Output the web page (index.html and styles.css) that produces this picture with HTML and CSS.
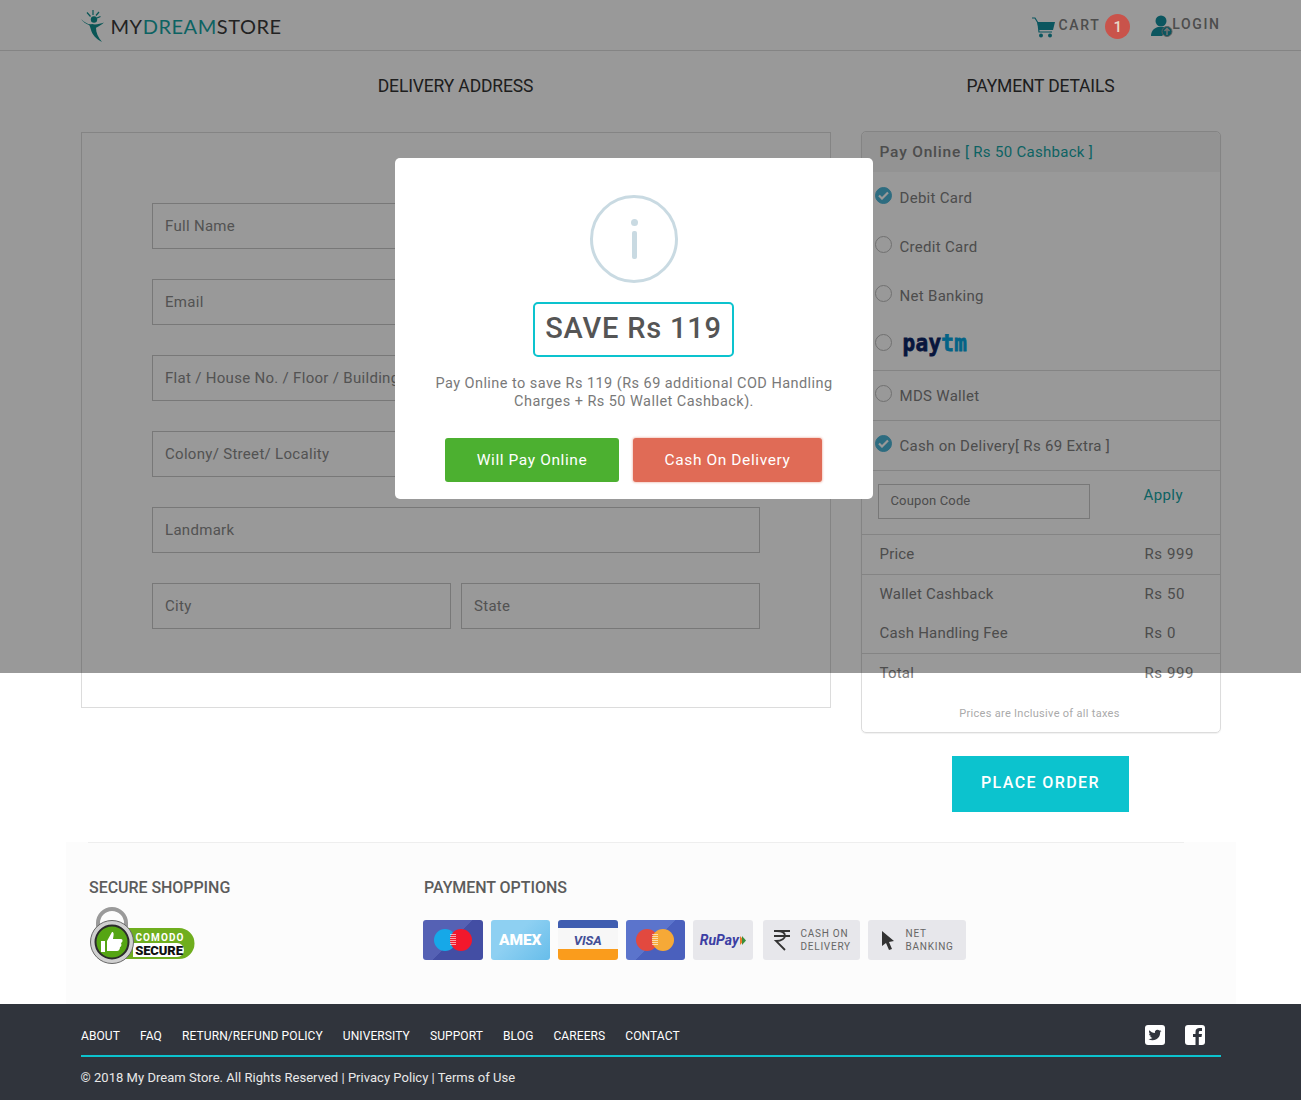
FILE: index.html
```html
<!DOCTYPE html>
<html lang="en">
<head>
<meta charset="utf-8">
<title>My Dream Store - Checkout</title>
<link rel="stylesheet" href="styles.css">
</head>
<body>
<header class="topbar">
  <div class="wrap topbar-inner">
    <a class="logo">
      <svg class="logo-mark" width="26" height="34" viewBox="0 0 26 34"><path fill="#0f8f8f" d="M0 10C4 14 8 16 11 15 14 16 19 15 23 13.500 19 17 16 18 15 19 15 24 17 28 21 33 15 30 11 25 10 21 9 18 9 17 8 16 5 15 2 13 0 10z"/><circle cx="13" cy="10.500" r="3.200" fill="#0f8f8f"/><path fill="none" stroke="#0f8f8f" stroke-width="1.200" d="M12 6V1M9.500 7.500 6 3.500M15 6.500l3-3.500M16 9l3.500-1.500"/></svg>
      <span class="logo-text">MY<b>DREAM</b>STORE</span>
    </a>
    <nav class="topnav">
      <a class="cart">
        <svg width="23" height="21" viewBox="0 0 23 21"><path fill="none" stroke="#138f9f" stroke-width="1.200" d="M0 1h3l3 5 1 9h13"/><path fill="#138f9f" d="M5 5h18l-2 8H7z"/><circle cx="9" cy="18.500" r="2" fill="#138f9f"/><circle cx="18" cy="18.500" r="2" fill="#138f9f"/></svg>
        <span class="nav-label">CART</span>
        <span class="badge">1</span>
      </a>
      <a class="login">
        <svg width="22" height="22" viewBox="0 0 22 22"><circle cx="10" cy="6" r="5.500" fill="#138f9f"/><path fill="#138f9f" d="M0 21c0-5 3-8 7-9h6c3 1 4 2 4 3l-6 6z"/><circle cx="16" cy="16.500" r="5" fill="#138f9f" stroke="#999" stroke-width="1"/><path fill="none" stroke="#bbb" stroke-width="1.500" d="M16 20v-6m-2.500 2 2.500-2.500 2.500 2.500"/></svg>
        <span class="nav-label">LOGIN</span>
      </a>
    </nav>
  </div>
</header>

<main class="wrap checkout">
  <section class="col-left">
    <h2 class="col-title">DELIVERY ADDRESS</h2>
    <form class="address-card">
      <div class="field">Full Name</div>
      <div class="field">Email</div>
      <div class="field">Flat / House No. / Floor / Building</div>
      <div class="field">Colony/ Street/ Locality</div>
      <div class="field">Landmark</div>
      <div class="field-row">
        <div class="field">City</div>
        <div class="field">State</div>
      </div>
    </form>
  </section>
  <section class="col-right">
    <h2 class="col-title">PAYMENT DETAILS</h2>
    <div class="pay-card">
      <div class="pay-head"><b>Pay Online</b> <span class="teal">[ Rs 50 Cashback ]</span></div>
      <div class="pay-option first"><span class="radio checked"><svg width="11" height="9" viewBox="0 0 11 9"><path fill="none" stroke="#fff" stroke-width="2.200" d="M1 4.500 4 7.500 10 1.500"/></svg></span>Debit Card</div>
      <div class="pay-option"><span class="radio"></span>Credit Card</div>
      <div class="pay-option"><span class="radio"></span>Net Banking</div>
      <div class="pay-option lined paytm-row"><span class="radio"></span><span class="paytm">pay<i>tm</i></span></div>
      <div class="pay-option lined"><span class="radio"></span>MDS Wallet</div>
      <div class="pay-option lined"><span class="radio checked"><svg width="11" height="9" viewBox="0 0 11 9"><path fill="none" stroke="#fff" stroke-width="2.200" d="M1 4.500 4 7.500 10 1.500"/></svg></span>Cash on Delivery[ Rs 69 Extra ]</div>
      <div class="coupon"><div class="coupon-input">Coupon Code</div><a class="apply">Apply</a></div>
      <div class="price-row lined"><span>Price</span><span class="amount">Rs 999</span></div>
      <div class="price-row short"><span>Wallet Cashback</span><span class="amount">Rs 50</span></div>
      <div class="price-row lined"><span>Cash Handling Fee</span><span class="amount">Rs 0</span></div>
      <div class="price-row"><span>Total</span><span class="amount">Rs 999</span></div>
      <p class="tax-note">Prices are Inclusive of all taxes</p>
    </div>
    <a class="place-order">PLACE ORDER</a>
  </section>
</main>

<section class="assurance">
  <div class="assurance-rule"></div>
  <div class="assurance-body">
    <div class="secure">
      <h3 class="assure-title">SECURE SHOPPING</h3>
      <svg class="comodo" width="107" height="59" viewBox="0 0 107 59">
        <path fill="none" stroke="#9a9a9a" stroke-width="4" d="M9 24V16a14 14 0 0 1 28 0v8"/>
        <path fill="#6fae1e" d="M30 21h60a15.500 15.500 0 0 1 0 31H30z"/>
        <path fill="#fff" d="M44 36h44a7 7 0 0 1 0 14H44z"/>
        <circle cx="23" cy="35" r="21.500" fill="#d0d0d0" stroke="#666"/>
        <circle cx="23" cy="35" r="16.500" fill="#55a513" stroke="#2c2c2c" stroke-width="2"/>
        <path fill="#fff" d="M12 34h4v11h-4zm6 0 5-9c2 0 2 2 1 7h8c2 0 2 3 0 4 1 2 0 4-1 4 0 2-1 4-3 4H18z"/>
        <text class="comodo-top" x="71" y="33.500" text-anchor="middle">COMODO</text>
        <text class="comodo-bottom" x="70" y="48" text-anchor="middle">SECURE</text>
      </svg>
    </div>
    <div class="payments">
      <h3 class="assure-title shifted">PAYMENT OPTIONS</h3>
      <div class="pay-icons">
        <span class="pcard maestro"><i class="dot blue"></i><i class="dot red"></i></span>
        <span class="pcard amex">AMEX</span>
        <span class="pcard visa">VISA</span>
        <span class="pcard master"><i class="dot redm"></i><i class="dot amber"></i></span>
        <span class="pcard rupay">RuPay<svg width="6" height="9" viewBox="0 0 6 9"><path fill="#e8792b" d="M0 0l4 4.500L0 9z"/><path fill="#3a8f3a" d="M2 0l4 4.500L2 9z"/></svg></span>
        <span class="pcard wide cod"><svg width="18" height="22" viewBox="0 0 18 22"><path fill="none" stroke="#333" stroke-width="1.800" d="M1 2h16M1 7h16M4 2c7 0 8 3 8 5s-3 5-9 5l9 9"/></svg><span class="wide-text">CASH ON<br>DELIVERY</span></span>
        <span class="pcard wide net"><svg width="14" height="20" viewBox="0 0 14 20"><path fill="#333" d="M1 1l12 10-5 1 3 7-3 1-3-7-4 3z"/></svg><span class="wide-text">NET<br>BANKING</span></span>
      </div>
    </div>
  </div>
</section>

<footer class="site-footer">
  <div class="wrap">
    <div class="footer-top">
      <nav class="footer-links">
        <a>ABOUT</a><a>FAQ</a><a>RETURN/REFUND POLICY</a><a>UNIVERSITY</a><a>SUPPORT</a><a>BLOG</a><a>CAREERS</a><a>CONTACT</a>
      </nav>
      <div class="socials">
        <svg width="20" height="20" viewBox="0 0 20 20"><rect width="20" height="20" rx="3" fill="#fff"/><g transform="translate(3.500 3.500) scale(.54)"><path fill="#30343c" d="M23.953 4.570a10 10 0 0 1-2.825.775 4.958 4.958 0 0 0 2.163-2.723c-.951.555-2.005.959-3.127 1.184a4.920 4.920 0 0 0-8.384 4.482C7.690 8.095 4.067 6.130 1.640 3.162a4.822 4.822 0 0 0-.666 2.475c0 1.710.870 3.213 2.188 4.096a4.904 4.904 0 0 1-2.228-.616v.060a4.923 4.923 0 0 0 3.946 4.827 4.996 4.996 0 0 1-2.212.085 4.936 4.936 0 0 0 4.604 3.417 9.867 9.867 0 0 1-6.102 2.105c-.390 0-.779-.023-1.170-.067a13.995 13.995 0 0 0 7.557 2.209c9.053 0 13.998-7.496 13.998-13.985 0-.210 0-.420-.015-.630A9.935 9.935 0 0 0 24 4.590z"/></g></svg>
        <svg width="20" height="20" viewBox="0 0 20 20"><rect width="20" height="20" rx="3" fill="#fff"/><path fill="#30343c" d="M10.500 20v-8H8V9h2.500V7c0-3 1.700-4 4-4 1 0 1.800 0 2.500.100V6h-1.600C14 6 13.800 6.700 13.800 7.500V9H17l-.500 3h-2.700v8z"/></svg>
      </div>
    </div>
    <p class="copyright">© 2018 My Dream Store. All Rights Reserved | Privacy Policy | Terms of Use</p>
  </div>
</footer>

<div class="overlay"></div>
<div class="modal">
  <div class="info-ring"><span class="info-dot"></span><span class="info-bar"></span></div>
  <div class="save-box">SAVE Rs 119</div>
  <p class="modal-text">Pay Online to save Rs 119 (Rs 69 additional COD Handling Charges + Rs 50 Wallet Cashback).</p>
  <div class="modal-actions">
    <a class="btn btn-green">Will Pay Online</a>
    <a class="btn btn-red">Cash On Delivery</a>
  </div>
</div>
</body>
</html>
```
FILE: styles.css
```css
* { box-sizing: border-box; }
html, body { margin: 0; padding: 0; }
body {
  position: relative;
  height: 1100px;
  overflow: hidden;
  background: #fff;
  color: #808080;
  font-family: Roboto, "Liberation Sans", sans-serif;
  font-size: 15px;
}
.wrap { width: 1140px; margin: 0 auto; }

.topbar { height: 51px; border-bottom: 1px solid #dcdcdc; }
.topbar-inner { display: flex; justify-content: space-between; height: 50px; }
.logo { display: flex; align-items: center; gap: 4px; margin-top: 2px; }
.logo-mark { margin-top: -1px; }
.logo-text { font-family: Lato, sans-serif; font-size: 20px; letter-spacing: .55px; color: #3a3a3a; }
.logo-text b { font-weight: 400; color: #15a5a5; }
.topnav { display: flex; align-items: center; gap: 21px; }
.cart, .login { display: flex; align-items: center; }
.cart svg { margin-top: 4px; }
.login svg { margin: 2px -1px 0 0; }
.nav-label { font-size: 14px; font-weight: 500; letter-spacing: 1.600px; color: #808080; margin-top: -3px; }
.cart .nav-label { margin-left: 4px; margin-top: 0; }
.badge {
  position: relative; z-index: 5;
  width: 25px; height: 25px; margin: 2px 0 0 5px;
  border-radius: 50%;
  background: #c9534b; color: #e8d8c8;
  font-size: 15px; font-weight: 500; line-height: 27px; text-align: center;
}

.checkout { display: flex; justify-content: space-between; height: 791px; }
.col-left { width: 750px; }
.col-right { width: 360px; display: flex; flex-direction: column; align-items: center; }
.col-title {
  height: 81px; margin: 0; width: 100%;
  font-size: 17.500px; font-weight: 400; line-height: 70px; letter-spacing: -.15px; text-align: center; color: #333;
}
.address-card {
  display: flex; flex-direction: column; gap: 30px;
  height: 576px;
  padding: 70px;
  border: 1px solid #dcdcdc;
}
.field {
  height: 46px; padding: 0 12.500px;
  border: 1px solid #c8c8c8;
  background: #fff;
  line-height: 44px; font-size: 15px; letter-spacing: .3px; color: #8a8a8a;
  white-space: nowrap; overflow: hidden;
}
.field-row { display: flex; gap: 10px; }
.field-row .field { flex: 1; }

.pay-card {
  width: 360px; height: 602px; margin-top: -1px;
  border: 1px solid #dcdcdc; border-radius: 5px;
  box-shadow: 0 1px 1px rgba(0,0,0,.06);
}
.pay-head {
  height: 40px; padding: 0 18px;
  background: #f5f5f5;
  line-height: 40px; font-size: 15.500px;
  border-radius: 5px 5px 0 0;
}
.pay-head b { font-weight: 500; letter-spacing: .8px; }
.teal { color: #15a5a5; font-size: 15px; letter-spacing: .3px; }
.pay-option {
  display: flex; align-items: center;
  height: 49px; padding-left: 13px;
  font-size: 15px; letter-spacing: .3px;
}
.pay-option.first { height: 51px; padding-top: 1px; margin-bottom: -1px; }
.pay-option.lined { height: 50px; border-bottom: 1px solid #dcdcdc; }
.pay-option.paytm-row { height: 51px; }
.radio {
  display: flex; align-items: center; justify-content: center;
  width: 17px; height: 17px; margin: -5px 8px 0 0; flex: none;
  border: 1px solid #bbb; border-radius: 50%;
}
.radio.checked { background: #4cb4d6; border-color: #4cb4d6; }
.paytm {
  margin: -3px 0 0 3px;
  font-family: "DejaVu Sans Mono", monospace; font-weight: 700; font-size: 21px; line-height: 1;
  color: #0d2566; -webkit-text-stroke: .7px currentColor; transform: scaleY(1.100);
}
.paytm i { font-style: normal; color: #05a5e0; }
.coupon {
  display: flex; align-items: flex-start;
  height: 64px; padding: 13px 0 0 16px;
  border-bottom: 1px solid #dcdcdc;
}
.coupon-input {
  width: 212px; height: 35px; padding-left: 12px;
  border: 1px solid #c8c8c8;
  line-height: 31px; font-size: 13px; letter-spacing: .15px;
}
.apply { margin: 2px 0 0 54px; font-size: 15px; letter-spacing: .4px; color: #15a5a5; }
.price-row {
  display: flex; justify-content: space-between;
  height: 40px; padding: 0 26px 0 18px;
  font-size: 15px; letter-spacing: .2px; line-height: 38px;
}
.price-row.lined { border-bottom: 1px solid #dcdcdc; }
.price-row.short { height: 39px; }
.amount { width: 49px; white-space: nowrap; letter-spacing: .6px; }
.tax-note { margin: 0; text-align: center; font-size: 11px; letter-spacing: .3px; line-height: 40px; color: #aaa; padding-right: 2px; }
.place-order {
  width: 177px; height: 56px; margin-top: 23px;
  background: #0cc3ce; color: #fff;
  font-size: 16px; font-weight: 500; letter-spacing: 1.400px; line-height: 54px; text-align: center;
}

.assurance { width: 1170px; height: 162px; margin: -30px auto 0; background: #fcfcfc; position: relative; top: 30px; }
.assurance-rule { width: 1096px; height: 1px; margin-left: 22px; background: #eee; }
.assurance-body { display: flex; padding: 34px 0 0 23.500px; }
.secure { width: 334px; }
.assure-title { margin: 0; font-size: 16px; font-weight: 500; line-height: 22px; letter-spacing: -.05px; color: #5c5c5c; }
.assure-title.shifted { margin-left: 1px; }
.comodo { display: block; margin-top: 8px; }
.comodo-top { font-family: Roboto, sans-serif; font-size: 10px; font-weight: 700; letter-spacing: 1.100px; fill: #fff; }
.comodo-bottom { font-family: Roboto, sans-serif; font-size: 13px; font-weight: 900; letter-spacing: -.1px; fill: #111; }
.pay-icons { display: flex; gap: 8px; margin-top: 21px; }
.pcard {
  display: flex; align-items: center; justify-content: center;
  width: 59.500px; height: 40px; flex: none;
  border-radius: 3px; background: #e7e7eb;
}
.maestro { background: linear-gradient(135deg, #5561b4 50%, #434ea4 50%); }
.master { background: linear-gradient(135deg, #5b74cc 50%, #4a60bd 50%); }
.dot { display: block; position: relative; width: 22px; height: 22px; border-radius: 50%; }
.dot + .dot { margin-left: -6px; }
.dot + .dot::before {
  content: ""; position: absolute; left: 0; top: 5px; width: 6px; height: 12px;
  background: repeating-linear-gradient(rgba(255,255,255,.6) 0 1px, transparent 1px 2px);
}
.blue { background: #16a8e8; }
.red { background: #f2182c; }
.redm { background: #e2493f; }
.amber { background: #f6a937; }
.amex {
  background: linear-gradient(135deg, #8ed0f2 40%, #67bdea);
  color: #fff; font-size: 15.500px; font-weight: 900; letter-spacing: -.1px;
}
.visa {
  background: linear-gradient(#3f5db0 0, #3f5db0 8px, #f7f7f7 8px, #f7f7f7 29px, #fa9c1c 29px);
  color: #434e96; font-size: 13px; font-weight: 700; font-style: italic;
}
.rupay { color: #3c3fa4; font-size: 14px; font-weight: 700; font-style: italic; gap: 1px; margin-right: 2px; }
.wide { justify-content: flex-start; gap: 10px; }
.cod { width: 97px; padding-left: 10px; }
.net { width: 98px; padding-left: 13px; gap: 11px; }
.wide-text { margin-top: 1px; font-size: 10px; line-height: 12.500px; letter-spacing: .75px; color: #666; }

.site-footer { position: absolute; left: 0; right: 0; top: 1004px; height: 96px; background: #30343c; color: #fff; }
.footer-top { display: flex; justify-content: space-between; height: 53px; border-bottom: 2px solid #0cc3ce; }
.footer-links { display: flex; gap: 20px; padding: 25px 0 0 .5px; font-size: 12px; line-height: 14px; letter-spacing: .1px; }
.socials { display: flex; gap: 20px; padding: 21px 16px 0 0; }
.copyright { margin: 0; padding-top: 12px; font-size: 13px; line-height: 18px; letter-spacing: .03px; color: #e8e8e8; }

.overlay { position: absolute; left: 0; top: 0; width: 100%; height: 673px; background: rgba(0,0,0,.4); }
.modal {
  position: absolute; left: 395px; top: 158px;
  display: flex; flex-direction: column; align-items: center;
  width: 478px; height: 341px; padding-top: 37px;
  background: #fff; border-radius: 5px;
}
.info-ring {
  display: flex; flex-direction: column; align-items: center;
  width: 88px; height: 88px; padding-top: 21px;
  border: 3px solid #c9dae2; border-radius: 50%;
}
.info-dot { width: 7px; height: 7px; border-radius: 50%; background: #c9dae2; }
.info-bar { width: 5px; height: 28px; margin-top: 5px; border-radius: 2px; background: #c9dae2; }
.save-box {
  width: 201px; height: 55px; margin: 19px 1px 0 0;
  border: 2px solid #0cc3ce; border-radius: 5px;
  font-size: 29px; font-weight: 500; line-height: 49px; letter-spacing: .8px; text-align: center; color: #555;
}
.modal-text {
  width: 420px; margin: 18px 0 0;
  font-size: 14.500px; line-height: 18px; letter-spacing: .45px; text-align: center; color: #797979;
}
.modal-actions { display: flex; gap: 14px; margin: 27px 1px 0 0; }
.btn {
  height: 44px; border-radius: 3px; color: #fff;
  font-size: 15.500px; line-height: 44px; letter-spacing: .6px; text-align: center;
}
.btn-green { width: 174px; background: #4cb030; }
.btn-red { width: 189px; background: #e06b56; box-shadow: 0 0 2px 1px #f4d0c8; }
```
